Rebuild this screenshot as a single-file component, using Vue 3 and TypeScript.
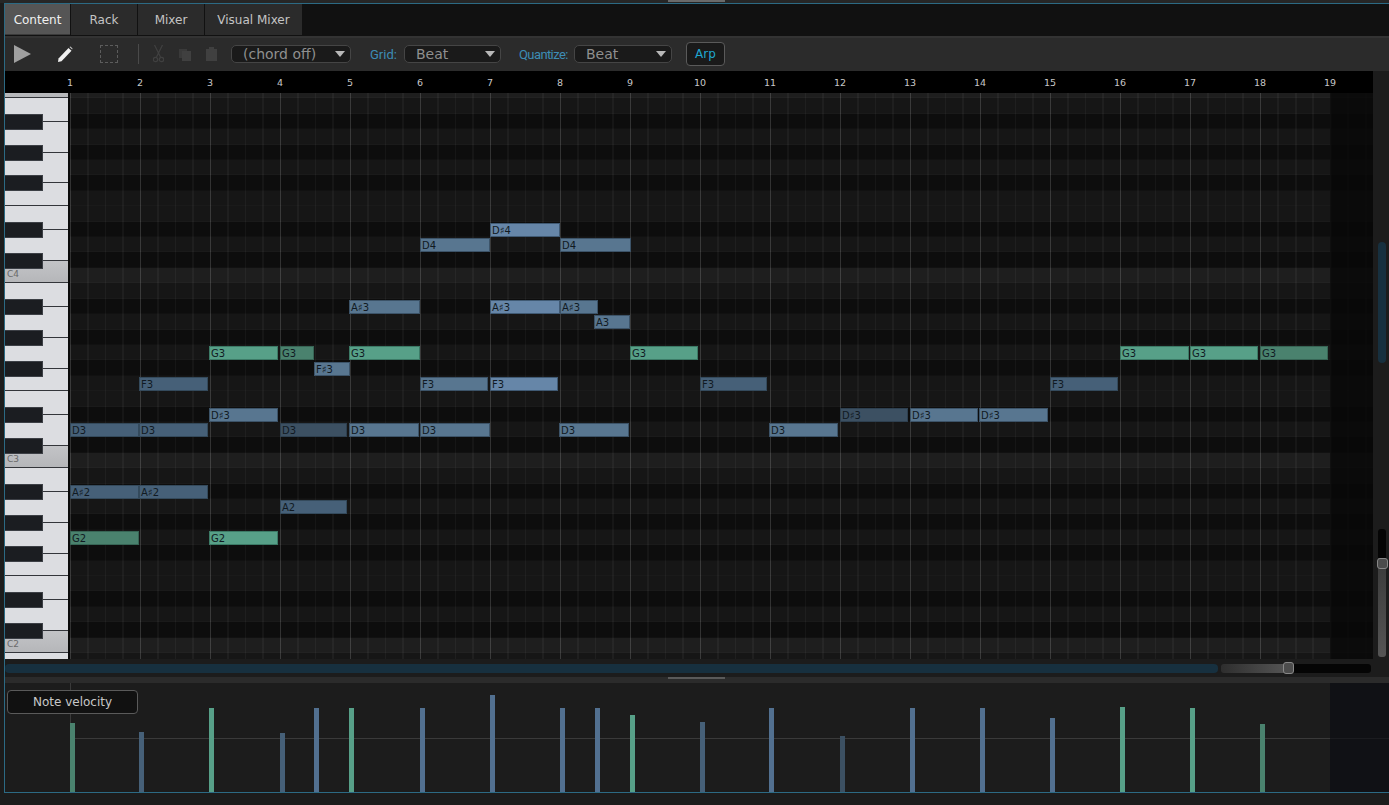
<script setup lang="ts">
type Tone = 'b1' | 'b2' | 'b3' | 'b4' | 'g1' | 'g2'

interface Note {
  label: string
  x: number
  w: number
  row: number
  tone: Tone
}

const rowH = 15.417
const tabs = ['Content', 'Rack', 'Mixer', 'Visual Mixer']
const bars = Array.from({ length: 19 }, (_, i) => i + 1)

// row 0 is C4, counting downwards in semitones
const rows = Array.from({ length: 38 }, (_, i) => i - 12)
const pitchClass = (row: number) => ((row % 12) + 12) % 12
const isBlack = (row: number) => [2, 4, 6, 9, 11].includes(pitchClass(row))

const rowClass = (row: number) => {
  if (pitchClass(row) === 0) return 'row-c'
  return isBlack(row) ? 'row-black' : 'row-white'
}

const rowTop = (row: number) => 175 + rowH * row

const blackKeys = rows.filter(isBlack)
const keyLines = rows
  .filter((r) => [0, 7].includes(pitchClass(r)))
  .map((r) => rowTop(r + 1) - 1)
  .concat(blackKeys.map((r) => rowTop(r) + 7))
const cKeys = [
  { name: '', row: -12 },
  { name: 'C4', row: 0 },
  { name: 'C3', row: 12 },
  { name: 'C2', row: 24 },
]

const notes: Note[] = [
  { label: 'D♯4', x: 490, w: 70, row: -3, tone: 'b1' },
  { label: 'D4', x: 420, w: 70, row: -2, tone: 'b2' },
  { label: 'D4', x: 560, w: 71, row: -2, tone: 'b2' },
  { label: 'A♯3', x: 349, w: 71, row: 2, tone: 'b2' },
  { label: 'A♯3', x: 490, w: 70, row: 2, tone: 'b1' },
  { label: 'A♯3', x: 560, w: 38, row: 2, tone: 'b2' },
  { label: 'A3', x: 594, w: 36, row: 3, tone: 'b2' },
  { label: 'G3', x: 209, w: 69, row: 5, tone: 'g1' },
  { label: 'G3', x: 280, w: 34, row: 5, tone: 'g2' },
  { label: 'G3', x: 349, w: 71, row: 5, tone: 'g1' },
  { label: 'G3', x: 630, w: 68, row: 5, tone: 'g1' },
  { label: 'G3', x: 1120, w: 69, row: 5, tone: 'g1' },
  { label: 'G3', x: 1190, w: 68, row: 5, tone: 'g1' },
  { label: 'G3', x: 1260, w: 68, row: 5, tone: 'g2' },
  { label: 'F♯3', x: 314, w: 36, row: 6, tone: 'b2' },
  { label: 'F3', x: 139, w: 69, row: 7, tone: 'b3' },
  { label: 'F3', x: 420, w: 68, row: 7, tone: 'b2' },
  { label: 'F3', x: 490, w: 68, row: 7, tone: 'b1' },
  { label: 'F3', x: 700, w: 67, row: 7, tone: 'b3' },
  { label: 'F3', x: 1050, w: 68, row: 7, tone: 'b3' },
  { label: 'D♯3', x: 209, w: 69, row: 9, tone: 'b2' },
  { label: 'D♯3', x: 840, w: 68, row: 9, tone: 'b4' },
  { label: 'D♯3', x: 910, w: 68, row: 9, tone: 'b2' },
  { label: 'D♯3', x: 979, w: 69, row: 9, tone: 'b2' },
  { label: 'D3', x: 70, w: 69, row: 10, tone: 'b3' },
  { label: 'D3', x: 139, w: 69, row: 10, tone: 'b3' },
  { label: 'D3', x: 280, w: 67, row: 10, tone: 'b4' },
  { label: 'D3', x: 349, w: 70, row: 10, tone: 'b2' },
  { label: 'D3', x: 420, w: 70, row: 10, tone: 'b2' },
  { label: 'D3', x: 559, w: 70, row: 10, tone: 'b2' },
  { label: 'D3', x: 769, w: 69, row: 10, tone: 'b2' },
  { label: 'A♯2', x: 70, w: 69, row: 14, tone: 'b3' },
  { label: 'A♯2', x: 139, w: 69, row: 14, tone: 'b3' },
  { label: 'A2', x: 280, w: 67, row: 15, tone: 'b3' },
  { label: 'G2', x: 70, w: 69, row: 17, tone: 'g2' },
  { label: 'G2', x: 209, w: 69, row: 17, tone: 'g1' },
]

const velocities: { x: number; top: number; tone: string }[] = [
  { x: 70, top: 723, tone: 'g2' },
  { x: 139, top: 732, tone: 'b3' },
  { x: 209, top: 708, tone: 'g1' },
  { x: 280, top: 733, tone: 'b3' },
  { x: 314, top: 708, tone: 'b2' },
  { x: 349, top: 708, tone: 'g1' },
  { x: 420, top: 708, tone: 'b2' },
  { x: 490, top: 695, tone: 'b1' },
  { x: 560, top: 708, tone: 'b2' },
  { x: 595, top: 708, tone: 'b2' },
  { x: 630, top: 715, tone: 'g1' },
  { x: 700, top: 722, tone: 'b3' },
  { x: 769, top: 708, tone: 'b2' },
  { x: 840, top: 736, tone: 'b4' },
  { x: 910, top: 708, tone: 'b2' },
  { x: 980, top: 708, tone: 'b2' },
  { x: 1050, top: 718, tone: 'b2' },
  { x: 1120, top: 707, tone: 'g1' },
  { x: 1190, top: 708, tone: 'g1' },
  { x: 1260, top: 724, tone: 'g2' },
]

const noteStyle = (n: Note) => ({
  left: `${n.x - 70}px`,
  width: `${n.w}px`,
  top: `${rowTop(n.row) + 1}px`,
})
</script>

<template>
  <div class="app">
    <div class="top-strip"><div class="grip" /></div>
    <div class="frame">
      <div class="tabs">
        <div v-for="(tab, i) in tabs" :key="tab" class="tab" :class="{ active: i === 0 }">{{ tab }}</div>
      </div>

      <div class="toolbar">
        <svg class="tool play" width="17" height="18" viewBox="0 0 17 18"><path d="M0 0 L17 9 L0 18 Z" fill="#a0a0a0" /></svg>
        <svg class="tool pencil" width="16" height="17" viewBox="0 0 16 17">
          <path d="M1 16 L1.5 12.5 L11.5 2 L14.5 4.8 L4.5 15.2 Z" fill="#f0f0f0" />
          <path d="M12.5 1 L13.5 0.5 L15.5 2.5 L15.2 3.6 Z" fill="#cfcfcf" />
        </svg>
        <div class="tool marquee" />
        <div class="sep" />
        <svg class="tool cut" width="11" height="18" viewBox="0 0 11 18" fill="none" stroke="#404040" stroke-width="1.2">
          <path d="M1.5 0 L7.5 12 M9.5 0 L3.5 12" />
          <circle cx="2.5" cy="14.5" r="2.2" />
          <circle cx="8.5" cy="14.5" r="2.2" />
        </svg>
        <svg class="tool copy" width="12" height="13" viewBox="0 0 12 13">
          <path d="M0 1 H8 V10 H0 Z" fill="#3a3a3a" />
          <path d="M3 3 H12 V13 H3 Z" fill="#404040" />
        </svg>
        <svg class="tool paste" width="11" height="14" viewBox="0 0 11 14">
          <path d="M0 2 H3 V0 H8 V2 H11 V14 H0 Z" fill="#404040" />
        </svg>
        <div class="select chord"><span>(chord off)</span><i class="caret" /></div>
        <span class="tool-label grid-label">Grid:</span>
        <div class="select beat"><span>Beat</span><i class="caret" /></div>
        <span class="tool-label quant-label">Quantize:</span>
        <div class="select beat quant"><span>Beat</span><i class="caret" /></div>
        <div class="arp">Arp</div>
      </div>

      <div class="editor">
        <div class="editor-left">
          <div class="ruler">
            <span v-for="bar in bars" :key="bar" class="bar-no">{{ bar }}</span>
          </div>
          <div class="roll">
            <div class="piano">
              <div
                v-for="c in cKeys"
                :key="c.row"
                class="c-key"
                :style="{ top: `${rowTop(c.row) - 8}px` }"
              >
                <span>{{ c.name }}</span>
              </div>
              <div v-for="(y, i) in keyLines" :key="i" class="key-line" :style="{ top: `${y}px` }" />
              <div v-for="r in blackKeys" :key="r" class="black-key" :style="{ top: `${rowTop(r)}px` }" />
            </div>
            <div class="canvas">
              <div class="rows">
                <div v-for="r in rows" :key="r" class="row" :class="rowClass(r)" />
              </div>
              <div class="beat-lines" />
              <div class="past-end" />
              <div v-for="(n, i) in notes" :key="i" class="note" :class="n.tone" :style="noteStyle(n)">{{ n.label }}</div>
            </div>
          </div>
        </div>
        <div class="vscroll">
          <div class="vthumb" />
          <div class="vzoom"><div class="vhandle" /></div>
        </div>
      </div>

      <div class="hbar">
        <div class="hthumb" />
        <div class="hzoom"><div class="hhandle" /></div>
      </div>

      <div class="divider"><div class="grip" /></div>

      <div class="velocity">
        <div class="vel-axis" />
        <div class="vel-first" />
        <div class="vel-end" />
        <div class="vel-btn">Note velocity</div>
        <div
          v-for="(v, i) in velocities"
          :key="i"
          class="vel-bar"
          :class="`vel-${v.tone}`"
          :style="{ left: `${v.x - 5}px`, top: `${v.top - 683}px` }"
        />
      </div>
    </div>
  </div>
</template>

<style>
html,
body {
  margin: 0;
  background: #1c1c1c;
  overflow: hidden;
}
</style>

<style scoped>
.app {
  width: 1389px;
  height: 805px;
  background: #1c1c1c;
  font-family: 'DejaVu Sans', sans-serif;
  overflow: hidden;
}

.top-strip {
  height: 3px;
  background: #262626;
}

.grip {
  width: 57px;
  height: 2px;
  margin-left: 668px;
  background: #6a6a6a;
}

.frame {
  margin-left: 4px;
  height: 788px;
  box-sizing: content-box;
  border-left: 1px solid #2c6a84;
  border-top: 1px solid #2c6a84;
  border-bottom: 1px solid #2c6a84;
  display: flex;
  flex-direction: column;
}

.tabs {
  height: 32px;
  display: flex;
  gap: 1px;
  background: #111111;
  flex: none;
}

.tab {
  width: 66px;
  height: 31px;
  background: #2b2b2b;
  color: #c4c4c4;
  font-size: 12px;
  line-height: 33px;
  text-align: center;
}

.tab:nth-child(4) {
  width: 97px;
}

.tab.active {
  width: 65px;
  background: #555555;
  color: #f0f0f0;
  box-shadow: inset 0 -1px 0 #3a3a3a;
}

.toolbar {
  height: 33px;
  box-sizing: border-box;
  flex: none;
  display: flex;
  align-items: center;
  background: #2b2b2b;
  border-top: 2px solid #333333;
  padding: 0 0 1px 9px;
  min-height: 35px;
}

.tool {
  flex: none;
}

.pencil {
  margin-left: 26px;
}

.marquee {
  width: 16px;
  height: 16px;
  margin-left: 27px;
  border: 1px dashed #5c5c5c;
}

.sep {
  width: 1px;
  height: 20px;
  margin-left: 20px;
  background: #4a4a4a;
}

.cut {
  margin-left: 14px;
}

.copy {
  margin-left: 15px;
}

.paste {
  margin-left: 15px;
}

.select {
  flex: none;
  height: 18px;
  box-sizing: border-box;
  display: flex;
  align-items: center;
  background: #1a1a1a;
  border: 1px solid #454545;
  border-radius: 5px;
  color: #8f8f8f;
  font-size: 14px;
  position: relative;
}

.chord {
  width: 120px;
  margin-left: 14px;
  padding-left: 11px;
}

.beat {
  width: 97px;
  margin-left: 7px;
  padding-left: 11px;
}

.quant {
  width: 98px;
}

.caret {
  position: absolute;
  right: 5px;
  top: 5px;
  width: 0;
  height: 0;
  border-left: 5.5px solid transparent;
  border-right: 5.5px solid transparent;
  border-top: 6px solid #b8b8b8;
}

.tool-label {
  flex: none;
  color: #3d8db5;
  font-family: Roboto, sans-serif;
  font-size: 13px;
}

.grid-label {
  width: 27px;
  margin-left: 19px;
}

.quant-label {
  width: 48px;
  margin-left: 18px;
  letter-spacing: -0.6px;
}

.arp {
  flex: none;
  width: 39px;
  height: 24px;
  box-sizing: border-box;
  margin-left: 14px;
  border: 1px solid #5a5a5a;
  border-radius: 4px;
  background: #1a1a1a;
  color: #1fa6cf;
  font-size: 12px;
  line-height: 22px;
  text-align: center;
}

.editor {
  height: 588px;
  flex: none;
  display: flex;
}

.editor-left {
  width: 1368px;
  flex: none;
}

.ruler {
  height: 22px;
  background: #000000;
  display: flex;
  padding-left: 30px;
}

.bar-no {
  flex: none;
  width: 70px;
  text-align: center;
  color: #c8c8c8;
  font-size: 9.5px;
  line-height: 23px;
}

.roll {
  height: 566px;
  display: flex;
}

.piano {
  width: 63px;
  flex: none;
  position: relative;
  overflow: hidden;
  background: #dcdde1;
  border-right: 2px solid #0a0a0a;
}

.c-key {
  position: absolute;
  left: 0;
  width: 100%;
  height: 23px;
  background: linear-gradient(#c3c4c7, #b5b6b9);
}

.c-key span {
  position: absolute;
  left: 2px;
  bottom: 4px;
  color: #6a6a6a;
  font-size: 9px;
}

.key-line {
  position: absolute;
  left: 0;
  width: 100%;
  height: 1px;
  background: #33353a;
}

.black-key {
  position: absolute;
  left: 0;
  width: 38px;
  height: 16px;
  box-sizing: border-box;
  background: #1b1d21;
  border: 1px solid #3c3f45;
  border-left: none;
}

.canvas {
  flex: 1;
  position: relative;
  overflow: hidden;
  background: #0c0c0c;
}

.rows {
  margin-top: -10px;
}

.row {
  height: 15.417px;
  box-sizing: border-box;
  border-bottom: 1px solid rgba(255, 255, 255, 0.02);
}

.row-c {
  background: #1e1e1e;
}

.row-white {
  background: #161616;
}

.row-black {
  background: #0d0d0d;
}

.beat-lines {
  position: absolute;
  inset: 0;
  background-image:
    repeating-linear-gradient(90deg, rgba(255, 255, 255, 0.12) 0 1px, transparent 1px 70px),
    repeating-linear-gradient(90deg, rgba(255, 255, 255, 0.04) 0 1.5px, transparent 1.5px 17.5px);
}

.past-end {
  position: absolute;
  top: 0;
  bottom: 0;
  left: 1260px;
  right: 0;
  background: rgba(8, 8, 8, 0.85);
}

.note {
  position: absolute;
  height: 14px;
  box-sizing: border-box;
  border: 1px solid;
  color: #111a22;
  font-size: 10px;
  line-height: 13px;
  padding-left: 1px;
  white-space: nowrap;
  overflow: hidden;
}

.b1 {
  background: #6686a8;
  border-color: #405a74;
}

.b2 {
  background: #587690;
  border-color: #3c5368;
}

.b3 {
  background: #466078;
  border-color: #344a5c;
}

.b4 {
  background: #3c5062;
  border-color: #2e4050;
}

.g1 {
  background: #57a088;
  border-color: #3c7a66;
}

.g2 {
  background: #4a826e;
  border-color: #376555;
}

.vscroll {
  width: 16px;
  flex: none;
  background: #1c1c1c;
  position: relative;
}

.vthumb {
  width: 8px;
  height: 121px;
  margin: 171px 0 0 5px;
  background: #17303f;
  border-radius: 4px;
}

.vzoom {
  width: 8px;
  height: 128px;
  margin: 166px 0 0 5px;
  position: relative;
  border-radius: 3px;
  background: linear-gradient(#050505 0 29px, #3a3a3a 29px, #555555);
}

.vhandle {
  position: absolute;
  left: -1px;
  top: 29px;
  width: 11px;
  height: 11px;
  box-sizing: border-box;
  background: #4c4c4c;
  border: 1px solid #888888;
  border-radius: 3px;
}

.hbar {
  height: 18px;
  flex: none;
  display: flex;
  align-items: center;
  gap: 3px;
  background: #1c1c1c;
}

.hthumb {
  width: 1213px;
  height: 9px;
  background: #17303f;
  border-radius: 4px;
}

.hzoom {
  width: 150px;
  height: 9px;
  position: relative;
  border-radius: 3px;
  background: linear-gradient(90deg, #2e2e2e 0, #555555 67px, #050505 67px);
}

.hhandle {
  position: absolute;
  left: 62px;
  top: -2px;
  width: 11px;
  height: 12px;
  box-sizing: border-box;
  background: #4c4c4c;
  border: 1px solid #888888;
  border-radius: 3px;
}

.divider {
  height: 6px;
  flex: none;
  background: #2b2b2b;
}

.divider .grip {
  margin-left: 663px;
  height: 2px;
  background: #5a5a5a;
}

.velocity {
  flex: 1;
  position: relative;
  overflow: hidden;
  background: #1c1c1c;
}

.vel-axis {
  position: absolute;
  left: 65px;
  right: 0;
  top: 55px;
  height: 1px;
  background: #3a3a3a;
}

.vel-first {
  position: absolute;
  left: 65px;
  top: 0;
  width: 1px;
  height: 40px;
  background: #3a3a3a;
}

.vel-end {
  position: absolute;
  left: 1325px;
  right: 0;
  top: 0;
  bottom: 0;
  background: rgba(10, 12, 18, 0.65);
}

.vel-btn {
  position: absolute;
  left: 2px;
  top: 7px;
  width: 131px;
  height: 24px;
  box-sizing: border-box;
  background: #111111;
  border: 1px solid #5a5a5a;
  border-radius: 4px;
  color: #c8c8c8;
  font-size: 12px;
  line-height: 22px;
  text-align: center;
}

.vel-bar {
  position: absolute;
  bottom: 0;
  width: 5px;
}

.vel-b1,
.vel-b2 {
  background: #527090;
}

.vel-b3 {
  background: #466078;
}

.vel-b4 {
  background: #3c5062;
}

.vel-g1 {
  background: #57a088;
}

.vel-g2 {
  background: #4a826e;
}
</style>
